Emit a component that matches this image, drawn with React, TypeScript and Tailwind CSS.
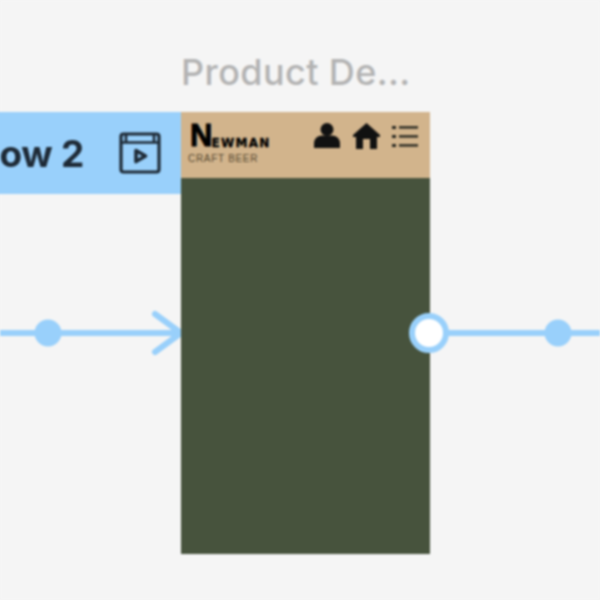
import React from "react";

const Blue = "#99d0fb";

export default function App() {
  return (
    <div className="w-[600px] h-[600px] overflow-hidden bg-[#f5f5f5]">
      <div className="relative w-[600px] h-[600px] bg-[#f5f5f5] blur-[0.8px] font-['Inter',sans-serif]">
        {/* Title */}
        <div className="absolute left-[181px] top-[50px] text-[36px] leading-[44px] font-medium text-[#b3b3b3] whitespace-nowrap tracking-[0.4px]">
          Product De...
        </div>

        {/* Flow label */}
        <div className="absolute -left-[4px] top-[112px] w-[185px] h-[82px] bg-[#99d0fb] flex items-center justify-end overflow-hidden">
          <span className="text-[#1e2a36] text-[37px] font-bold leading-none whitespace-nowrap mr-[33.5px] tracking-[-0.3px]">Flow 2</span>
          <svg width="44" height="44" viewBox="0 0 44 44" className="mr-[19.5px] shrink-0" fill="none" stroke="#1e2a36" strokeWidth="3.2" strokeLinejoin="round">
            <rect x="3" y="3" width="38" height="38" rx="2.5" />
            <path d="M3 11.5H41M8 3.5V11.5M36 3.5V11.5" strokeWidth="2.6" />
            <path d="M18 19.5L27.5 25L18 30.5Z" strokeWidth="3.6" />
          </svg>
        </div>

        {/* Left connector */}
        <svg className="absolute left-0 top-[300px]" width="190" height="66" viewBox="0 0 190 66" fill="none" stroke={Blue} strokeLinecap="round">
          <path d="M-4 33H180" strokeWidth="6" />
          <circle cx="48" cy="33" r="13.5" fill={Blue} stroke="none" />
          <path d="M155 14L181 33L155 52" strokeWidth="6" strokeLinejoin="round" />
        </svg>

        {/* Phone frame */}
        <div className="absolute left-[181px] top-[112px] w-[249px] h-[442px] flex flex-col bg-[#47533d]">
          <div className="h-[66px] bg-[#d2b48c] flex items-start text-black shrink-0">
            <div className="ml-[7px] mt-[12px] w-[102px] flex flex-col">
              <div className="flex items-end h-[24px] ml-[2px] leading-none">
                <span className="text-[31px] leading-[24px] font-bold font-['Liberation_Sans',sans-serif] [-webkit-text-stroke:1px_black]">N</span>
                <span className="text-[12px] tracking-[1.3px] leading-[10px] font-bold font-['DejaVu_Sans',sans-serif] -ml-[1px] [-webkit-text-stroke:0.3px_black]">EWMAN</span>
              </div>
              <div className="text-[10px] leading-[11px] mt-[5px] text-[#54472f] tracking-[0.7px] font-['Liberation_Sans',sans-serif] whitespace-nowrap">CRAFT BEER</div>
            </div>
            <div className="ml-[24px] mt-[11px] flex items-start gap-[13px]">
              {/* person */}
              <svg width="26" height="26" viewBox="0 0 26 26" fill="#111">
                <circle cx="13" cy="6.5" r="6.5" />
                <path d="M0 25V20C0 15.5 4 12.5 8 12.5H18C22 12.5 26 15.5 26 20V25Z" />
              </svg>
              {/* home */}
              <svg width="27" height="26" viewBox="0 0 27 26" fill="#111">
                <path d="M13.5 0L27 12V14H24V26H17V16H10V26H3V14H0V12Z" />
              </svg>
              {/* list */}
              <svg width="26" height="24" viewBox="0 0 26 24" className="-ml-[1px] mt-[2px]" fill="#2a2a22">
                <rect x="0" y="1" width="4" height="3" />
                <rect x="7" y="1.2" width="19" height="2.4" />
                <rect x="0" y="10" width="4" height="3" />
                <rect x="7" y="10.2" width="19" height="2.4" />
                <rect x="0" y="19" width="4" height="3" />
                <rect x="7" y="19.2" width="19" height="2.4" />
              </svg>
            </div>
          </div>
        </div>

        {/* Right connector */}
        <svg className="absolute left-[405px] top-[308px]" width="195" height="50" viewBox="0 0 195 50" fill="none">
          <path d="M25 25H200" stroke={Blue} strokeWidth="6" />
          <circle cx="153" cy="25" r="13.5" fill={Blue} />
          <circle cx="24" cy="25" r="17" fill="#fff" stroke={Blue} strokeWidth="6" />
        </svg>
      </div>
    </div>
  );
}
